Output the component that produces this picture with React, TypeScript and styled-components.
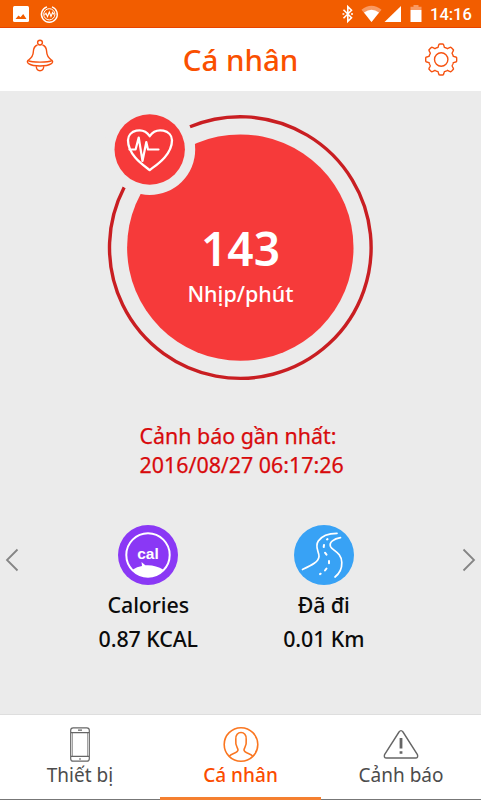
import React from "react";
import styled, { createGlobalStyle } from "styled-components";

const GlobalStyle = createGlobalStyle`
  * { box-sizing: border-box; }
  body { margin: 0; background: #ebebeb; font-family: "Noto Sans", "Open Sans", sans-serif; }
`;

const Screen = styled.div`
  width: 481px;
  height: 800px;
  display: flex;
  flex-direction: column;
  overflow: hidden;
  background: #ebebeb;
`;

const StatusBar = styled.div`
  height: 28px;
  flex: none;
  display: flex;
  justify-content: space-between;
  background: #f25d00;
  border-bottom: 1px solid #e84300;
`;

const StatusGroup = styled.div`
  display: flex;
  height: 28px;
`;

const Clock = styled.span`
  width: 51px;
  font: 500 16.5px/30px Roboto, sans-serif;
  color: #fff;
  white-space: nowrap;
`;

const Header = styled.header`
  height: 63px;
  flex: none;
  display: flex;
  justify-content: space-between;
  background: #fff;
`;

const Title = styled.h1`
  margin: 0;
  font-size: 29.5px;
  line-height: 64px;
  font-weight: 500;
  color: #fa5000;
`;

const IconButton = styled.button`
  width: 80px;
  height: 63px;
  padding: 0;
  border: 0;
  background: none;
  svg { display: block; }
`;

const Main = styled.main`
  height: 623px;
  flex: none;
  display: flex;
  flex-direction: column;
  align-items: center;
`;

const Gauge = styled.section`
  position: relative;
  width: 481px;
  height: 300px;
  flex: none;
`;

const GaugeArt = styled.svg`
  display: block;
`;

const Reading = styled.div`
  position: absolute;
  inset: 0;
  padding-top: 126px;
  display: flex;
  flex-direction: column;
  align-items: center;
  color: #fff;
`;

const Rate = styled.div`
  font-size: 46px;
  line-height: 62px;
  font-weight: 600;
`;

const Unit = styled.div`
  font-size: 21.5px;
  line-height: 30px;
  font-weight: 500;
`;

const Alert = styled.p`
  margin: 31px 0 0;
  width: 202px;
  height: 58px;
  font-size: 21.4px;
  line-height: 28.5px;
  font-weight: 400;
  color: #d80a0c;
  -webkit-text-stroke: 0.25px #d80a0c;
  white-space: nowrap;
`;

const Metrics = styled.section`
  width: 481px;
  margin-top: 44px;
  display: flex;
  justify-content: space-between;
`;

const Arrow = styled.button`
  width: 24px;
  height: 72px;
  padding: 0;
  border: 0;
  background: none;
  svg { display: block; }
`;

const MetricPair = styled.div`
  width: 351px;
  margin: 1px 9px 0 0;
  display: flex;
`;

const Metric = styled.div`
  flex: 1;
  display: flex;
  flex-direction: column;
  align-items: center;
  font-size: 21.4px;
  font-weight: 500;
  letter-spacing: -0.1px;
  color: #0b0b0b;
  white-space: nowrap;
  svg { display: block; }
`;

const MetricName = styled.div`
  margin-top: 3px;
  line-height: 34px;
`;

const MetricValue = styled.div`
  line-height: 34px;
`;

const Nav = styled.nav`
  height: 86px;
  flex: none;
  display: grid;
  grid-template-columns: 160px 161px 160px;
  background: #fff;
  border-top: 1px solid #dedede;
`;

const Tab = styled.a<{ $active?: boolean }>`
  display: flex;
  flex-direction: column;
  align-items: center;
  padding-top: 9px;
  font-size: 19px;
  font-weight: ${(p) => (p.$active ? 500 : 400)};
  line-height: 24px;
  color: ${(p) => (p.$active ? "#fb4c00" : "#4c4c4c")};
  border-bottom: ${(p) => (p.$active ? "3px solid #f58030" : "1px solid #777")};
  svg { display: block; flex: none; }
`;

const TabLabel = styled.span`
  margin-top: -1px;
  letter-spacing: 0.03px;
`;

const gearPath = (() => {
  const points: string[] = [];
  const total = 144;
  for (let i = 0; i < total; i++) {
    const a = (i / total) * Math.PI * 2;
    const wave = Math.max(-1, Math.min(1, Math.cos(a * 8) * 2.2));
    const r = 14 + wave * 1.5;
    points.push(`${(40.2 + Math.sin(a) * r).toFixed(2)} ${(31.5 - Math.cos(a) * r).toFixed(2)}`);
  }
  return `M${points.join("L")}Z`;
})();

const App = () => (
  <Screen>
    <GlobalStyle />
    <StatusBar>
      <StatusGroup>
        <svg width="70" height="28" fill="none">
          <rect x="13" y="6" width="16" height="16" rx="1.5" fill="#fff" />
          <path d="M15.5 19L18.5 15.5L20.5 17.3L23.2 14L26.5 19Z" fill="#f25d00" />
          <circle cx="49.3" cy="14.3" r="5.6" stroke="#fff" strokeWidth="1" />
          <path d="M47 6.8A7.9 7.9 0 1 0 52 6.9" stroke="#fff" strokeWidth="1.4" />
          <path d="M44.5 15L46 13.2L47.5 16.5L49.3 12L51 16.5L52.6 12.5L54 14.5" stroke="#fff" strokeWidth="1.1" />
        </svg>
      </StatusGroup>
      <StatusGroup>
        <svg width="90" height="28" fill="none">
          <path d="M3.5 9.7L11.5 17.8L7.8 21.3V6.7L11.5 10.2L3.5 18.3" stroke="#fff" strokeWidth="1.6" />
          <path d="M2.5 14h1.8M11 14h2" stroke="#fff" strokeWidth="1.5" />
          <path d="M21.5 9.8Q31.5 1.8 41.5 9.8L31.5 22Z" fill="#f99a63" />
          <path d="M24 12.5Q31.5 7 39 12.5L31.5 22Z" fill="#fff" />
          <path d="M61 6V22H44.5Z" fill="#fff" />
          <path d="M70.5 6.7h3V5h5v1.7h3V10h-11Z" fill="#f99a63" />
          <path d="M70.5 10h11v12h-11Z" fill="#fff" />
        </svg>
        <Clock>14:16</Clock>
      </StatusGroup>
    </StatusBar>

    <Header>
      <IconButton aria-label="Thông báo">
        <svg width="80" height="63" fill="none" stroke="#f65210" strokeWidth="1.4">
          <circle cx="40" cy="14.6" r="2.4" />
          <path d="M37.5 17C34.3 18 33.4 21 33.3 24C33.2 29 30.5 30.5 27.8 32.6C26.3 34.3 28.5 38 40 38S53.7 34.3 52.2 32.6C49.5 30.5 46.8 29 46.7 24C46.6 21 45.7 18 42.5 17" />
          <path d="M28 32.6C32 34.6 48 34.6 52 32.6M36.3 38.3C36.3 44.2 43.7 44.2 43.7 38.3" />
        </svg>
      </IconButton>
      <Title>Cá nhân</Title>
      <IconButton aria-label="Cài đặt">
        <svg width="80" height="63" fill="none" stroke="#f65210" strokeWidth="1.4">
          <path d={gearPath} strokeLinejoin="round" />
          <circle cx="40.2" cy="31.5" r="6.7" />
        </svg>
      </IconButton>
    </Header>

    <Main>
      <Gauge>
        <GaugeArt width="481" height="300" fill="none">
          <circle cx="240.3" cy="156.6" r="113.2" fill="#f63a3a" />
          <path d="M190 35.8A130.8 130.8 0 1 1 124.2 96.3" stroke="#c91e22" strokeWidth="3.4" />
          <circle cx="149.7" cy="58.5" r="45.5" fill="#ebebeb" />
          <circle cx="149.7" cy="58.5" r="35.2" fill="#f63a3a" />
          <path d="M149.7 78.4C145 74.5 128 64 128 48.5C128 38.5 143 34.5 149.7 44.5C156.5 34.5 172 38.5 172 48.5C172 64 154.5 74.5 149.7 78.4Z" transform="translate(0 .7)" stroke="#fff" strokeWidth="2.3" strokeLinejoin="round" />
          <path d="M129.5 58.5H135.6L138.7 46.5L142.5 70L146.3 51L148 58.5H158.5" stroke="#fff" strokeWidth="2.2" strokeLinecap="round" strokeLinejoin="round" />
        </GaugeArt>
        <Reading>
          <Rate>143</Rate>
          <Unit>Nhịp/phút</Unit>
        </Reading>
      </Gauge>
      <Alert>Cảnh báo gần nhất:<br />2016/08/27 06:17:26</Alert>
      <Metrics>
        <Arrow aria-label="Trước">
          <svg width="24" height="72" fill="none"><path d="M17.5 25.5L7 36L17.5 46.5" stroke="#858585" strokeWidth="1.8" /></svg>
        </Arrow>
        <MetricPair>
          <Metric>
            <svg width="60" height="60" fill="none">
              <circle cx="30" cy="30" r="30" fill="#8a38f5" />
              <circle cx="30" cy="30" r="21.7" stroke="#fff" strokeWidth="2" />
              <path d="M14.5 44.8Q19 41.4 24 41L23.5 37L27.3 40.3Q37 39.5 45.5 44.8Q39 51.8 30 51.8T14.5 44.8Z" fill="#fff" />
              <text x="30" y="34.3" textAnchor="middle" fill="#fff" fontFamily="Liberation Sans, sans-serif" fontSize="15.5" fontWeight="700" letterSpacing="0">cal</text>
            </svg>
            <MetricName>Calories</MetricName>
            <MetricValue>0.87 KCAL</MetricValue>
          </Metric>
          <Metric>
            <svg width="60" height="60" fill="none" stroke="#fff" strokeWidth="1.7" strokeLinecap="round">
              <circle cx="30" cy="30" r="30" fill="#38a2f5" stroke="none" />
              <path d="M8.5 44.5C18 40 24.5 37 25 31.5C25.3 27 20.3 22 24.3 16C28 10.5 35.5 8.3 43 8.3" />
              <path d="M46.5 12.7C40 13.8 34.8 17 36.5 21.5C38.3 25.8 47.5 27 47.8 37.5C48 43 45.7 48.3 41 52" />
              <path d="M33 14.5l.5-.4M30 20l-.3 2M31 27.7l1.5 2M35 36v2.2M32.5 43.5l-1.5 2M26.7 48.7l-.7.4" strokeWidth="2" />
            </svg>
            <MetricName>Đã đi</MetricName>
            <MetricValue>0.01 Km</MetricValue>
          </Metric>
        </MetricPair>
        <Arrow aria-label="Sau">
          <svg width="24" height="72" fill="none"><path d="M6.5 25.5L17 36L6.5 46.5" stroke="#858585" strokeWidth="1.8" /></svg>
        </Arrow>
      </Metrics>
    </Main>

    <Nav>
      <Tab>
        <svg width="40" height="40" fill="none" stroke="#666" strokeWidth="1.2">
          <rect x="10.7" y="3.8" width="18.6" height="33.4" rx="2.5" />
          <path d="M11 8.6H29M11 32.4H29M18 6.2h4M19 35h2" />
          <path d="M12.5 9V32M27.5 9V32" strokeWidth="0.6" />
        </svg>
        <TabLabel>Thiết bị</TabLabel>
      </Tab>
      <Tab $active>
        <svg width="40" height="40" fill="none" stroke="#fa7620" strokeWidth="1.6">
          <circle cx="20" cy="20.5" r="16.8" />
          <path d="M8.5 32C10 29.5 17 29 17 26C17 23.5 14 22.5 14.8 15.5C13.8 6.2 26.2 6.2 25.2 15.5C26 22.5 23 23.5 23 26C23 29 30 29.5 31.5 32" />
        </svg>
        <TabLabel>Cá nhân</TabLabel>
      </Tab>
      <Tab>
        <svg width="40" height="40" fill="none" stroke="#666" strokeWidth="1.4">
          <path d="M18 8Q20 5.2 22 8L36.4 30.5Q37.5 34 34.5 34H5.5Q2.5 34 3.6 30.5Z" />
          <path d="M20 14V24.5M20 27.2V29.8" strokeWidth="2.8" />
        </svg>
        <TabLabel>Cảnh báo</TabLabel>
      </Tab>
    </Nav>
  </Screen>
);

export default App;
